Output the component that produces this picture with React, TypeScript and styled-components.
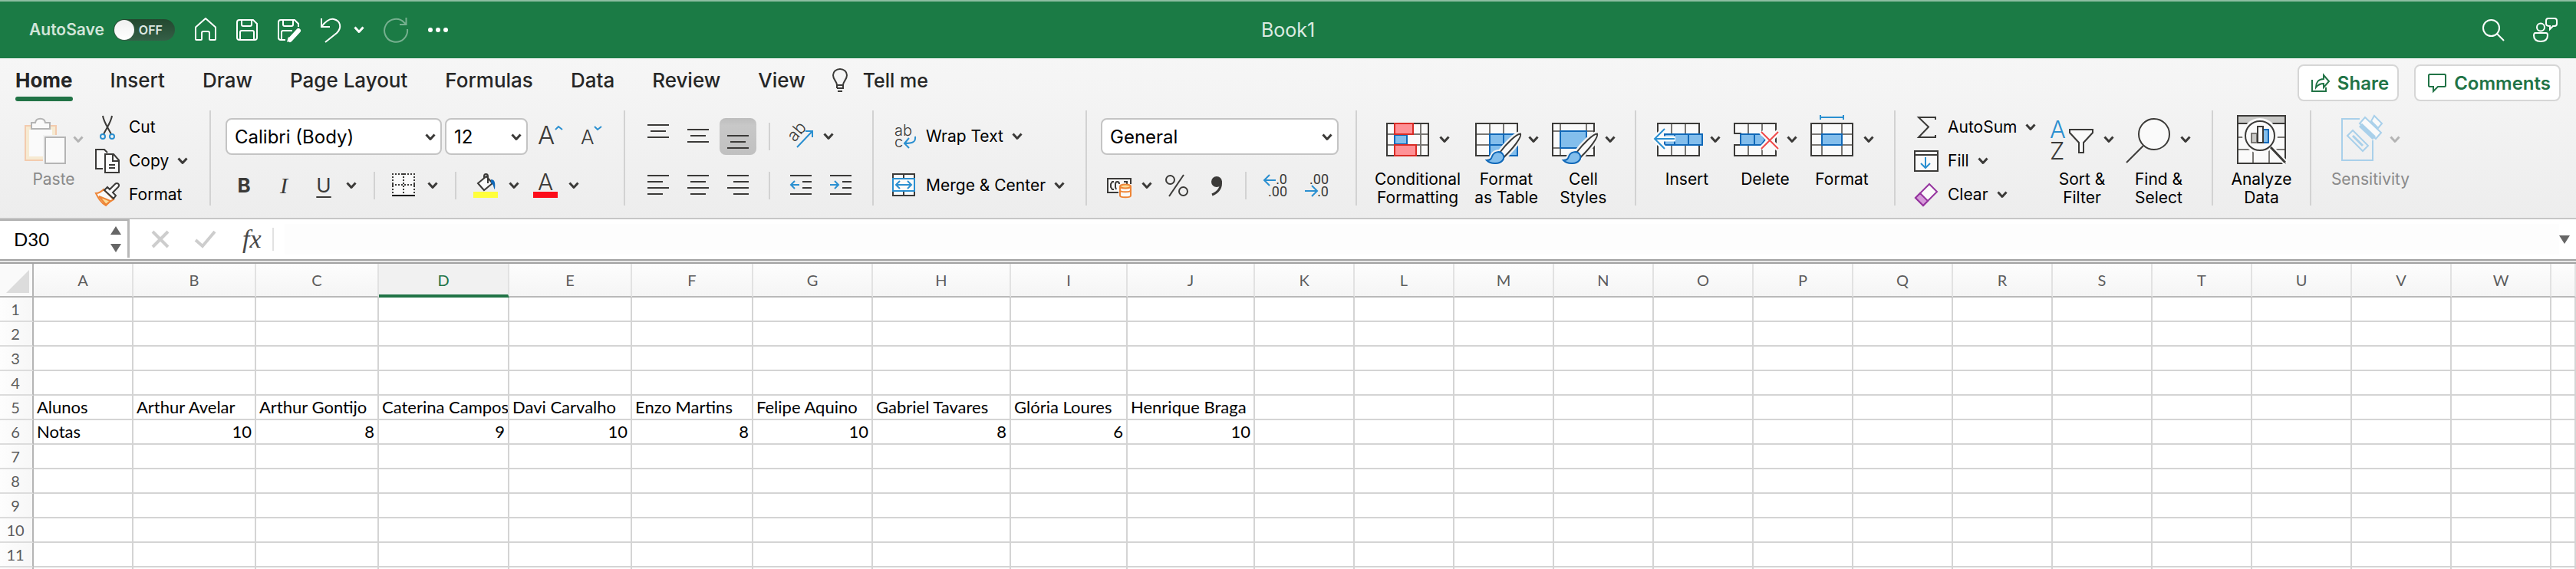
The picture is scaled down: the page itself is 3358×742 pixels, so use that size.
import React from 'react';
import styled, { createGlobalStyle, css } from 'styled-components';

const INK = '#3b3a38';
const GRID = '#797774';
const BLUE = '#2a8fd0';
const DEEP = '#1068b8';
const SKY = '#83beec';
const PAPER = '#fafafa';
const GREEN = '#217346';

const Global = createGlobalStyle`
  * { box-sizing: border-box; }
  html, body, #root { height: 100%; }
  body { margin: 0; background: #fff; font-family: Inter, 'Liberation Sans', sans-serif; color: #000; }
  button, input, select { font: inherit; color: inherit; }
  svg { display: block; flex: none; overflow: visible; }
`;

/* ---------- window and title bar ---------- */

const Window = styled.div`
  display: flex;
  flex-direction: column;
  height: 100vh;
  overflow: hidden;
`;

const TitleBar = styled.header`
  display: grid;
  grid-template-columns: 1fr auto 1fr;
  align-items: center;
  flex: none;
  height: 76px;
  padding: 0 24px;
  border-top: 2px solid #8dbda1;
  background: #1b7b45;
  color: #fff;
`;

const QuickAccess = styled.div`
  display: flex;
  align-items: center;
  gap: 26px;
  padding-left: 14px;
`;

const WindowTools = styled.div`
  display: flex;
  align-items: center;
  justify-content: flex-end;
  gap: 38px;
`;

const DocTitle = styled.h1`
  margin: 0;
  font-size: 25px;
  line-height: 32px;
  font-weight: 400;
  color: #dcebe2;
`;

const AutoSave = styled.label`
  display: flex;
  align-items: center;
  gap: 12px;
  font-size: 21px;
  line-height: 28px;
  font-weight: 600;
  color: #d1e5d9;
`;

const Switch = styled.span`
  position: relative;
  display: flex;
  align-items: center;
  width: 80px;
  height: 28px;
  padding-left: 33px;
  border-radius: 14px;
  background: linear-gradient(#23482f, #355f47);
  font-size: 16px;
  color: #dfe9e3;
`;

const SwitchInput = styled.input`
  position: absolute;
  inset: 0;
  width: 100%;
  height: 100%;
  margin: 0;
  opacity: 0;
`;

const Knob = styled.span`
  position: absolute;
  left: 1px;
  top: 1px;
  width: 26px;
  height: 26px;
  border-radius: 50%;
  background: linear-gradient(#f0f0f0, #fff);
`;

const IconButton = styled.button<{ $gap?: number; $faded?: boolean }>`
  display: flex;
  align-items: center;
  justify-content: center;
  gap: ${(p) => p.$gap ?? 14}px;
  flex: none;
  padding: 0;
  border: 0;
  background: none;
  opacity: ${(p) => (p.$faded ? 0.4 : 1)};
`;

/* ---------- tab strip ---------- */

const Ribbon = styled.section`
  flex: none;
  border-bottom: 2px solid #c6c6c6;
  background: linear-gradient(#f6f6f6, #ededed);
`;

const TabStrip = styled.nav`
  display: flex;
  align-items: flex-start;
  justify-content: space-between;
  height: 58px;
  padding: 0 20px;
`;

const Tabs = styled.div`
  display: flex;
  gap: 49px;
`;

const Tab = styled.button<{ $active?: boolean }>`
  padding: 8px 0 0;
  border: 0;
  background: none;
  font-size: 26px;
  line-height: 42px;
  font-weight: ${(p) => (p.$active ? 700 : 500)};
  white-space: nowrap;
  color: #262626;
  &::after {
    content: '';
    display: block;
    height: 6px;
    border-radius: 3px;
    background: ${(p) => (p.$active ? GREEN : 'transparent')};
  }
`;

const TellMe = styled.button`
  display: flex;
  align-items: center;
  gap: 20px;
  height: 42px;
  margin: 8px 0 0 -14px;
  padding: 0;
  border: 0;
  background: none;
  font-size: 25px;
  font-weight: 500;
  white-space: nowrap;
  color: #262626;
`;

const ShareActions = styled.div`
  display: flex;
  gap: 20px;
  padding-top: 8px;
`;

const ActionButton = styled.button`
  display: flex;
  align-items: center;
  gap: 10px;
  height: 48px;
  padding: 0 11px 0 16px;
  border: 2px solid #d6d6d6;
  border-radius: 8px;
  background: #fff;
  font-size: 24px;
  font-weight: 600;
  color: ${GREEN};
`;

/* ---------- ribbon groups ---------- */

const RibbonBody = styled.div`
  display: flex;
  align-items: flex-start;
  padding: 10px 0 14px;
`;

const Separator = styled.div<{ $short?: boolean }>`
  flex: none;
  width: 2px;
  height: ${(p) => (p.$short ? 36 : 124)}px;
  background: #d2d2d2;
`;

const Group = styled.div<{ $width?: number; $pad: number; $gap?: number }>`
  display: flex;
  flex: none;
  align-items: flex-start;
  gap: ${(p) => p.$gap ?? 18}px;
  width: ${(p) => (p.$width ? `${p.$width}px` : 'auto')};
  padding: 6px 0 0 ${(p) => p.$pad}px;
`;

const TwoRows = styled.div`
  display: grid;
  grid-template-rows: 48px 36px;
  gap: 22px;
  padding-top: 4px;
`;

const Row = styled.div<{ $gap: number; $indent?: number }>`
  display: flex;
  align-items: center;
  gap: ${(p) => p.$gap}px;
  padding-left: ${(p) => p.$indent ?? 0}px;
`;

const Commands = styled.div<{ $width?: number }>`
  display: flex;
  flex-direction: column;
  gap: 12px;
  width: ${(p) => (p.$width ? `${p.$width}px` : 'auto')};
`;

const Command = styled.button`
  display: flex;
  align-items: center;
  gap: 12px;
  height: 32px;
  padding: 0;
  border: 0;
  background: none;
  font-size: 21px;
  line-height: 24px;
  white-space: nowrap;
`;

const BigButton = styled.button<{ $min?: number; $disabled?: boolean }>`
  display: flex;
  flex-direction: column;
  align-items: center;
  gap: 8px;
  min-width: ${(p) => p.$min ?? 82}px;
  padding: 0;
  border: 0;
  background: none;
  font-size: 21px;
  line-height: 24px;
  color: ${(p) => (p.$disabled ? '#8a8a8a' : '#000')};
`;

const BigLabel = styled.span`
  white-space: pre;
  text-align: center;
`;

const BigIcon = styled.span`
  display: flex;
  align-items: center;
  gap: 10px;
`;

const SquareButton = styled.button<{ $pressed?: boolean }>`
  display: flex;
  align-items: center;
  justify-content: center;
  width: 48px;
  height: ${(p) => (p.$pressed ? 48 : 36)}px;
  padding: 0;
  border: 0;
  border-radius: 8px;
  background: ${(p) => (p.$pressed ? 'linear-gradient(#bdbdbd, #c8c8c8 20%, #c0c0c0)' : 'none')};
`;

const Glyph = styled.button<{ $kind: 'bold' | 'italic' | 'underline' }>`
  width: 30px;
  padding: 0;
  border: 0;
  background: none;
  line-height: 32px;
  color: ${INK};
  ${(p) =>
    p.$kind === 'bold' &&
    css`
      font-size: 26px;
      font-weight: 700;
    `}
  ${(p) =>
    p.$kind === 'italic' &&
    css`
      font-family: 'Liberation Serif', serif;
      font-size: 30px;
      font-style: italic;
    `}
  ${(p) =>
    p.$kind === 'underline' &&
    css`
      font-size: 26px;
      text-decoration: underline 2px;
      text-underline-offset: 5px;
    `}
`;

const ComboBox = styled.div<{ $width: number }>`
  position: relative;
  width: ${(p) => p.$width}px;
  height: 48px;
`;

const ComboSelect = styled.select`
  appearance: none;
  width: 100%;
  height: 100%;
  padding: 0 30px 0 10px;
  border: 2px solid #c4c4c4;
  border-radius: 8px;
  background: #fff;
  font-size: 24px;
`;

const ComboArrow = styled.span`
  position: absolute;
  right: 9px;
  top: 20px;
  pointer-events: none;
`;

/* ---------- formula bar ---------- */

const FormulaBar = styled.div`
  display: flex;
  flex: none;
  align-items: center;
  height: 52px;
  padding-right: 8px;
  background: #fff;
`;

const NameBox = styled.div`
  display: flex;
  align-items: center;
  align-self: flex-start;
  width: 169px;
  height: 50px;
  padding: 0 8px 0 18px;
  border-top: 2px solid #b0b0b0;
  border-right: 3px solid #b8b8b8;
`;

const NameInput = styled.input`
  flex: 1;
  min-width: 0;
  padding: 0 0 2px;
  border: 0;
  outline: 0;
  background: none;
  font-family: Lato, 'Liberation Sans', sans-serif;
  font-size: 24px;
`;

const FormulaTools = styled.div`
  display: flex;
  align-items: center;
  gap: 34px;
  padding: 0 14px 0 29px;
  border-right: 2px solid #e2e2e2;
`;

const FormulaInput = styled.input`
  flex: 1;
  height: 40px;
  margin-left: 14px;
  padding: 0 8px;
  border: 0;
  outline: 0;
  background: #fdfdfd;
  font-size: 24px;
`;

const Fx = styled.button`
  padding: 0;
  border: 0;
  background: none;
  font-family: 'Liberation Serif', serif;
  font-size: 34px;
  line-height: 30px;
  font-style: italic;
  color: #484848;
`;

const Splitter = styled.div`
  flex: none;
  height: 6px;
  border: solid #a2a2a2;
  border-width: 2px 0;
  background: #e8e8e8;
`;

/* ---------- sheet ---------- */

const SheetArea = styled.main`
  flex: 1;
  min-height: 0;
  overflow: hidden;
`;

const Sheet = styled.table`
  width: 100%;
  table-layout: fixed;
  border-collapse: separate;
  border-spacing: 0;
  font-family: Lato, 'Liberation Sans', sans-serif;
`;

const Col = styled.col<{ $width?: number }>`
  width: ${(p) => (p.$width ? `${p.$width}px` : 'auto')};
`;

const Corner = styled.th`
  height: 44px;
  padding: 4px 4px 0 8px;
  border-right: 2px solid #b5b5b5;
  border-bottom: 2px solid #b5b5b5;
  background: #fafafa;
`;

const ColHead = styled.th<{ $selected?: boolean }>`
  height: 44px;
  padding: ${(p) => (p.$selected ? '2px 0 0' : '0')};
  border-right: 2px solid #e2e2e2;
  border-bottom: ${(p) => (p.$selected ? `4px solid ${GREEN}` : '2px solid #b9b9b9')};
  background: ${(p) => (p.$selected ? '#f1f1f1' : 'linear-gradient(#fdfdfd, #f5f5f5)')};
  font-size: 20px;
  line-height: 24px;
  font-weight: 400;
  color: ${(p) => (p.$selected ? GREEN : '#5c5c5c')};
`;

const RowHead = styled.th`
  height: 32px;
  padding: 0 2px 0 0;
  border-right: 2px solid #b5b5b5;
  border-bottom: 2px solid #dcdcdc;
  background: linear-gradient(90deg, #fdfdfd, #f7f7f7);
  font-size: 20px;
  line-height: 30px;
  font-weight: 400;
  color: #5c5c5c;
`;

const Cell = styled.td<{ $number?: boolean }>`
  height: 32px;
  padding: 0 4px;
  overflow: hidden;
  border-right: 2px solid #d4d4d4;
  border-bottom: 2px solid #d4d4d4;
  font-size: 22px;
  line-height: 30px;
  white-space: nowrap;
  text-align: ${(p) => (p.$number ? 'right' : 'left')};
`;

/* ---------- icons ---------- */

type IconProps = { w?: number; h?: number; stroke?: string; children: React.ReactNode };
const Icon = ({ w = 32, h = 32, stroke = INK, children }: IconProps) => (
  <svg width={w} height={h} viewBox={`0 0 ${w} ${h}`} fill="none" stroke={stroke} strokeWidth="2" aria-hidden="true">
    {children}
  </svg>
);

const Chevron = ({ color = INK, thin = false }: { color?: string; thin?: boolean }) => (
  <svg width={thin ? 12 : 14} height="10" viewBox={thin ? '1 0 12 10' : '0 0 14 10'} fill="none" stroke={color} strokeWidth="3" aria-hidden="true">
    <path d="M1.5 1.5 7 7.5l5.5-6" strokeLinejoin="round" />
  </svg>
);

const HANDLE = 'M59 24.5C54 24.5 41 37 32 49l6 5.5C49 43.5 61 29 59 24.5Z';
const BRISTLES = 'M15 59C20 59 21 57 22 54 24 48 32 46 36 51 40 57 34 63 27 63 22 63.5 18 62 15 59Z';
const Brush = () => (
  <>
    <path d={HANDLE} stroke="#f3f3f3" strokeWidth="7" />
    <path d={BRISTLES} stroke="#f3f3f3" strokeWidth="6" />
    <path d={HANDLE} fill={PAPER} />
    <path d={BRISTLES} fill={SKY} stroke={DEEP} />
  </>
);

const PasteIcon = () => (
  <Icon w={54} h={64} stroke="#b4b4b4">
    <path d="M1 14h40v45H1z" fill="#f6ead2" stroke="#f3cbae" />
    <path d="M6 19h30v35H6z" fill={PAPER} stroke="none" />
    <path d="M9 18v-8h5c1-7 12-7 13 0h6v8z" fill={PAPER} />
    <path d="M24 26h32v38H24z" fill="#f2f2f2" stroke="none" />
    <path d="M27 29h26v34H27z" fill={PAPER} />
  </Icon>
);

const CondIcon = () => (
  <Icon w={60} h={64}>
    <path d="M1 11h54v42H1z" fill={PAPER} />
    <path d="M11 12v40M45 12v40M2 25h52M2 39h52" stroke={GRID} />
    <path d="M11 26h16v12H11z" fill={SKY} stroke={DEEP} />
    <path d="M11 11h24v14H11zM11 39h28v14H11z" fill="#ff9196" stroke="#d92c26" />
  </Icon>
);

const FormatTableIcon = () => (
  <Icon w={60} h={64}>
    <path d="M1 11h54v42H1z" fill={PAPER} />
    <path d="M19 12v40M37 12v14M2 25h52M2 39h18" stroke={GRID} />
    <path d="M19 25h36v28H19zM37 25v28M19 39h36" fill={SKY} stroke={DEEP} />
    <path d="M1 11h54v13" />
    <Brush />
  </Icon>
);

const CellStylesIcon = () => (
  <Icon w={60} h={64}>
    <path d="M1 11h54v42H1z" fill={PAPER} />
    <path d="M11 12v40M45 12v40M2 21h52M2 43h52" stroke={GRID} />
    <path d="M11 21h34v22H11z" fill={SKY} stroke={DEEP} />
    <Brush />
  </Icon>
);

const InsertIcon = () => (
  <Icon w={64} h={64}>
    <path d="M5 11h54v42H5z" fill={PAPER} />
    <path d="M23 12v40M41 12v40" stroke={GRID} />
    <path d="M3 24h10v15H3z" fill={PAPER} stroke="none" />
    <path d="M14 25h49v14H14zM27 25v14M45 25v14" fill={SKY} stroke={DEEP} />
    <path d="M28 31H2M14 18 1 31l13 13" stroke={PAPER} strokeWidth="7" />
    <path d="M27 31H1M14 18 1 31l13 13" stroke={BLUE} />
  </Icon>
);

const DeleteIcon = () => (
  <Icon w={60} h={64}>
    <path d="M1 24V11h54v42H1V39h8V24z" fill={PAPER} />
    <path d="M19 12v12M37 12v12M19 40v12M37 40v12" stroke={GRID} />
    <path d="M9 25h27l5 7-5 7H9zM27 25v14" fill={SKY} stroke={DEEP} />
    <path d="m36 22 22 22M58 22 36 44" stroke={PAPER} strokeWidth="7" />
    <path d="m36 22 22 22M58 22 36 44" stroke="#f04a4a" />
  </Icon>
);

const FormatCellsIcon = () => (
  <Icon w={60} h={64}>
    <path d="M1 11h54v42H1z" fill={PAPER} />
    <path d="M15 12v40M41 12v40M2 25h52M2 39h52" stroke={GRID} />
    <path d="M15 25h26v14H15z" fill={SKY} stroke={DEEP} />
    <path d="M13 3h30M13 0v6M43 0v6" stroke={BLUE} />
  </Icon>
);

const SortIcon = () => (
  <Icon w={60} h={64}>
    <text x="-1" y="30" fontSize="31" fontWeight="300" fill={BLUE} stroke="none">A</text>
    <text x="-1" y="58" fontSize="31" fontWeight="300" fill={INK} stroke="none">Z</text>
    <path d="M25 19h30v4L43 36v13h-6V36L25 23z" fill={PAPER} />
  </Icon>
);

const FindIcon = () => (
  <Icon w={60} h={64}>
    <circle cx="35" cy="25" r="20" fill={PAPER} />
    <path d="M21 40-1 62" />
  </Icon>
);

const AnalyzeIcon = () => (
  <Icon w={64} h={64}>
    <path d="M1 1h62v62H1z" fill={PAPER} />
    <path d="M2 2h60v8H2z" fill="#c8c8c6" stroke="none" />
    <path d="M2 29h60M2 45h60M21 46v16M42 46v16" stroke={GRID} />
    <path d="M1 11h62" />
    <circle cx="30" cy="27" r="23" fill={PAPER} stroke="none" />
    <path d="m44 42 20 21" stroke={PAPER} strokeWidth="7" />
    <path d="m44 42 19 20" strokeWidth="3" />
    <circle cx="30" cy="27" r="19" fill={PAPER} />
    <path d="M19 24h7v12h-7z" fill="#c8c8c6" stroke={GRID} />
    <path d="M34 19h7v17h-7z" fill={SKY} stroke={DEEP} />
    <path d="M27 15h7v21h-7z" fill={PAPER} />
  </Icon>
);

const SensitivityIcon = () => (
  <Icon w={54} h={64} stroke="#a9d0ea">
    <path d="M24 5H1v54h40V33" />
    <path d="m8 27 7-7 20 20-7 7z" />
    <path d="m15 27 13 13" strokeWidth="3" />
    <path d="m24 11 7-8 21 20-7 8z" fill={PAPER} />
    <path d="m25 13 18 17" strokeWidth="6" />
    <path d="m39 8 4-7 10 10-5 6z" fill={PAPER} />
  </Icon>
);

const CutIcon = () => (
  <Icon>
    <path d="M10 1c1 7 4 11 11 24M22 1c-1 7-4 11-11 24" />
    <g stroke={BLUE}>
      <circle cx="10" cy="28" r="3" />
      <circle cx="22" cy="28" r="3" />
    </g>
  </Icon>
);

const CopyIcon = () => (
  <Icon>
    <path d="M10 26H1V1h11l4 4" fill={PAPER} />
    <path d="M13 7h11l7 8v16H13z" fill={PAPER} />
    <path d="M23 8v8h8M18 21h8M18 25h8" />
  </Icon>
);

const PainterIcon = () => (
  <Icon>
    <path d="M1 14c4 0 7-2 10-5l13 13c-4 2-7 4-10 8C7 26 4 20 1 14Z" fill={PAPER} stroke="#ee8536" />
    <path d="m5 18 15 6-6 5z" fill="#fbdc98" stroke="#ee8536" />
    <path d="m12 10 4-4 3 3 7-7c3-3 7 1 4 4l-7 7 4 4-3 4z" fill={PAPER} />
  </Icon>
);

const SumIcon = () => (
  <Icon>
    <path d="M28 6V3H6l13 12.5L6 29h22v-3" />
  </Icon>
);

const FillDownIcon = () => (
  <Icon>
    <path d="M1 3h30v26H1zM1 8h30" fill={PAPER} />
    <path d="M15 11v14M9 19l6 6 6-6" stroke={BLUE} />
  </Icon>
);

const EraserIcon = () => (
  <Icon stroke="#96359f">
    <path d="M20 2 30 12 12 30 2 20z" fill={PAPER} />
    <path d="m8 14 10 10-6 6L2 20z" fill="#d59ad9" />
  </Icon>
);

const GrowIcon = () => (
  <Icon>
    <text x="-1" y="26" fontSize="33" fontWeight="300" fill={INK} stroke="none">A</text>
    <path d="m22 7 4-4 5 4" stroke={BLUE} />
  </Icon>
);

const ShrinkIcon = () => (
  <Icon>
    <text x="1" y="26" fontSize="26" fontWeight="300" fill={INK} stroke="none">A</text>
    <path d="m19 3 4 4 5-4" stroke={BLUE} />
  </Icon>
);

const BordersIcon = () => (
  <Icon>
    <path d="M1 1h28v26H1z" fill={PAPER} stroke="none" />
    <path d="M0 1h30M0 15h30M1 0v27M15 0v27M29 0v27" strokeDasharray="2 2" />
    <path d="M0 29h30" stroke="#000" />
  </Icon>
);

const BucketIcon = () => (
  <Icon>
    <path d="m6 13 11-9 8 9-11 9z" fill={PAPER} />
    <path d="M14 7V4c0-4 5-4 5 0v9" />
    <path d="M23 8c5 0 6 4 5 13-2-2-1-6-5-9z" fill={DEEP} stroke="none" />
    <path d="M0 24h32v8H0z" fill="#ffff3c" stroke="none" />
  </Icon>
);

const FontColorIcon = () => (
  <Icon>
    <text x="6" y="22" fontSize="30" fontWeight="300" fill={INK} stroke="none">A</text>
    <path d="M0 24h32v8H0z" fill="#fc0d1b" stroke="none" />
  </Icon>
);

const LINES: Record<string, string> = {
  top: 'M0 1h28M4 9h20M0 17h28',
  middle: 'M0 7h28M4 15h20M0 23h28',
  bottom: 'M0 15h28M4 23h20M0 31h28',
  left: 'M0 3h28M0 11h20M0 19h28M0 27h20',
  center: 'M0 3h28M4 11h20M0 19h28M4 27h20',
  right: 'M0 3h28M8 11h20M0 19h28M8 27h20',
  indent: 'M0 3h28M16 11h12M16 19h12M0 27h28',
};
const LinesIcon = ({ kind, arrow }: { kind: string; arrow?: string }) => (
  <Icon w={28}>
    <path d={LINES[kind]} />
    {arrow && <path d={arrow} stroke={BLUE} />}
  </Icon>
);

const OrientationIcon = () => (
  <Icon>
    <text x="0" y="0" fontSize="22" fontWeight="300" fill={INK} stroke="none" transform="translate(8 24) rotate(-50)">ab</text>
    <path d="M11 30 31 9M22 9h9v8" stroke={BLUE} />
  </Icon>
);

const WrapIcon = () => (
  <Icon>
    <text x="3" y="15" fontSize="20" fontWeight="300" fill={INK} stroke="none">ab</text>
    <text x="3" y="30" fontSize="20" fontWeight="300" fill={INK} stroke="none">c</text>
    <path d="M30 16c1 7-3 9-14 9M22 18l-6 7 6 6" stroke={BLUE} />
  </Icon>
);

const MergeIcon = () => (
  <Icon>
    <path d="M1 1h28v28H1zM15 1v28" fill={PAPER} />
    <path d="M1 7h28v16H1z" fill={PAPER} stroke={BLUE} />
    <path d="M5 15h20M10 10l-5 5 5 5M20 10l5 5-5 5" stroke={BLUE} />
  </Icon>
);

const CurrencyIcon = () => (
  <Icon>
    <path d="M1 7h30v18H1z" fill={PAPER} />
    <path d="M9 11H7l-2 3v4l2 3h2M16 19v-5c0-4-5-4-5 0v4l1 3M22 11h4v3" />
    <path d="M15 14h19v20H15z" fill="#f0f0f0" stroke="none" />
    <path d="M17 17v12c0 3 14 3 14 0V17" fill={PAPER} stroke="#ee8536" />
    <path d="M17 22c0 3 14 3 14 0" stroke="#ee8536" />
    <ellipse cx="24" cy="17" rx="7" ry="2.5" fill="#fbdc98" stroke="#ee8536" />
  </Icon>
);

const PercentIcon = () => (
  <Icon w={30}>
    <circle cx="6.5" cy="8.5" r="5.5" />
    <circle cx="23.5" cy="23.5" r="5.5" />
    <path d="M24 2 5 30" />
  </Icon>
);

const CommaIcon = () => (
  <Icon w={30}>
    <circle cx="15" cy="11" r="7" fill={INK} stroke="none" />
    <path d="M20 10c2 8-3 15-11 18" strokeWidth="3" />
  </Icon>
);

const DecimalIcon = ({ more = false }: { more?: boolean }) => (
  <Icon>
    <g fontFamily="Roboto" fontSize="18" fill={INK} stroke="none" textAnchor="end">
      <text x="31" y="14">{more ? '.0' : '.00'}</text>
      <text x="31" y="30">{more ? '.00' : '.0'}</text>
    </g>
    <path d={more ? 'M16 9H1M8 2 1 9l7 7' : 'M0 23h15M9 16l7 7-7 7'} stroke={BLUE} />
  </Icon>
);

const HomeIcon = () => (
  <Icon w={28} stroke="#fff">
    <path d="M1 12.5 14 1l13 11.500V28q0 1-1 1h-6q-1 0-1-1v-8q0-2-2-2h-6q-2 0-2 2v8q0 1-1 1H2q-1 0-1-1Z" strokeLinejoin="round" />
  </Icon>
);

const SaveIcon = () => (
  <Icon w={28} stroke="#fff">
    <path d="M4 3h18l5 5v18q0 3-3 3H4q-3 0-3-3V6q0-3 3-3ZM7 3v6q0 2 2 2h9q2 0 2-2V3M5 29V19q0-2 2-2h14q2 0 2 2v10" />
  </Icon>
);

const SaveAsIcon = () => (
  <Icon w={28} stroke="#fff">
    <path d="M10 29H4q-3 0-3-3V6q0-3 3-3h18l5 5v4M7 3v6q0 2 2 2h9q2 0 2-2V3M5 29V19q0-2 2-2h12" />
    <path d="m27 17-11 12" strokeWidth="6" strokeLinecap="round" />
    <path d="m12 32 2-7 4 4z" fill="#fff" stroke="none" />
  </Icon>
);

const UndoIcon = () => (
  <Icon w={28} stroke="#fff">
    <path d="M3 1v11h11M3 12C9 4 14 1 19 2c9 2 11 11 4 18L8 32" />
  </Icon>
);

const RedoIcon = () => (
  <Icon stroke="#fff">
    <path d="M31 15A15 15 0 1 1 27 6.5L29.5 9M21 9h8.500V0" />
  </Icon>
);

const DotsIcon = () => (
  <Icon w={26} stroke="none">
    <g fill="#fff">
      <circle cx="3" cy="16" r="3" />
      <circle cx="13" cy="16" r="3" />
      <circle cx="23" cy="16" r="3" />
    </g>
  </Icon>
);

const SearchIcon = () => (
  <Icon w={28} h={28} stroke="#fff">
    <circle cx="11.5" cy="11.5" r="10.5" />
    <path d="m19 19 9 9" />
  </Icon>
);

const PeopleIcon = () => (
  <Icon stroke="#fff">
    <circle cx="10" cy="12.5" r="5" />
    <path d="M3 20h14q2 0 2 3 0 8-9 8t-9-8q0-3 2-3ZM20 1h8q3 0 3 3v4q0 3-3 3h-2l-4 4v-4q-5 0-5-3V4q0-3 3-3Z" />
  </Icon>
);

const BulbIcon = () => (
  <Icon w={20}>
    <path d="M6 22c0-5-5-7-5-13a9 8 0 0 1 18 0c0 6-5 8-5 13zM6 26h8v-4M6 22v4M7 30h6" />
  </Icon>
);

const ShareIcon = () => (
  <Icon w={24} h={24} stroke={GREEN}>
    <path d="M1 8v15h18v-5" />
    <path d="M16 2v5C9 7 6 12 6 18c3-4 6-5 10-5v5l7-8z" />
  </Icon>
);

const CommentIcon = () => (
  <Icon w={24} h={24} stroke={GREEN}>
    <path d="M2 1h20l1 1v14l-1 1h-9l-6 6v-6H2l-1-1V2z" />
  </Icon>
);

const SpinnerIcon = () => (
  <Icon w={14} h={34} stroke="none">
    <path d="M7 0l7 11H0zM7 34l7-11H0z" fill="#666" />
  </Icon>
);

/* ---------- data ---------- */

const TAB_NAMES = ['Home', 'Insert', 'Draw', 'Page Layout', 'Formulas', 'Data', 'Review', 'View'];

const COLUMNS: [string, number?][] = [
  ['A', 130], ['B', 160], ['C', 160], ['D', 170], ['E', 160], ['F', 158], ['G', 156], ['H', 180], ['I', 152], ['J', 166],
  ['K', 130], ['L', 130], ['M', 130], ['N', 130], ['O', 130], ['P', 130], ['Q', 130], ['R', 130], ['S', 130],
  ['T', 130], ['U', 130], ['V', 130], ['W', 130], [''],
];

const DATA: Record<number, (string | number)[]> = {
  5: ['Alunos', 'Arthur Avelar', 'Arthur Gontijo', 'Caterina Campos', 'Davi Carvalho', 'Enzo Martins', 'Felipe Aquino', 'Gabriel Tavares', 'Glória Loures', 'Henrique Braga'],
  6: ['Notas', 10, 8, 9, 10, 8, 10, 8, 6, 10],
};

const Combo = ({ label, value, width }: { label: string; value: string; width: number }) => (
  <ComboBox $width={width}>
    <ComboSelect aria-label={label} defaultValue={value}>
      <option>{value}</option>
    </ComboSelect>
    <ComboArrow>
      <Chevron thin />
    </ComboArrow>
  </ComboBox>
);

type BigProps = { icon: React.ReactNode; label: string; min?: number; disabled?: boolean; menu?: boolean };
const Big = ({ icon, label, min, disabled, menu = true }: BigProps) => (
  <BigButton $min={min} $disabled={disabled} disabled={disabled}>
    <BigIcon>
      {icon}
      {menu && <Chevron color={disabled ? '#b4b4b4' : INK} thin />}
    </BigIcon>
    <BigLabel>{label}</BigLabel>
  </BigButton>
);

type SmallProps = { icon: React.ReactNode; label: string; menu?: boolean };
const Small = ({ icon, label, menu }: SmallProps) => (
  <Command>
    {icon}
    {label}
    {menu && <Chevron thin />}
  </Command>
);

export default function App() {
  return (
    <Window>
      <Global />
      <TitleBar>
        <QuickAccess>
          <AutoSave>
            AutoSave
            <Switch>
              <SwitchInput type="checkbox" role="switch" />
              <Knob />
              OFF
            </Switch>
          </AutoSave>
          <IconButton aria-label="Home"><HomeIcon /></IconButton>
          <IconButton aria-label="Save"><SaveIcon /></IconButton>
          <IconButton aria-label="Save as"><SaveAsIcon /></IconButton>
          <IconButton aria-label="Undo" $gap={18}><UndoIcon /><Chevron color="#fff" thin /></IconButton>
          <IconButton aria-label="Redo" $faded><RedoIcon /></IconButton>
          <IconButton aria-label="More"><DotsIcon /></IconButton>
        </QuickAccess>
        <DocTitle>Book1</DocTitle>
        <WindowTools>
          <IconButton aria-label="Search"><SearchIcon /></IconButton>
          <IconButton aria-label="Account"><PeopleIcon /></IconButton>
        </WindowTools>
      </TitleBar>

      <Ribbon>
        <TabStrip>
          <Tabs>
            {TAB_NAMES.map((name, i) => (
              <Tab key={name} $active={i === 0}>{name}</Tab>
            ))}
            <TellMe><BulbIcon />Tell me</TellMe>
          </Tabs>
          <ShareActions>
            <ActionButton><ShareIcon />Share</ActionButton>
            <ActionButton><CommentIcon />Comments</ActionButton>
          </ShareActions>
        </TabStrip>

        <RibbonBody>
          <Group $width={273} $pad={32} $gap={16}>
            <Big icon={<PasteIcon />} label="Paste" min={76} disabled />
            <Commands>
              <Small icon={<CutIcon />} label="Cut" />
              <Small icon={<CopyIcon />} label="Copy" menu />
              <Small icon={<PainterIcon />} label="Format" />
            </Commands>
          </Group>
          <Separator />
          <Group $width={538} $pad={19}>
            <TwoRows>
              <Row $gap={14}>
                <Row $gap={4}>
                  <Combo label="Font" value="Calibri (Body)" width={282} />
                  <Combo label="Font size" value="12" width={108} />
                </Row>
                <Row $gap={22}>
                  <IconButton aria-label="Increase font size"><GrowIcon /></IconButton>
                  <IconButton aria-label="Decrease font size"><ShrinkIcon /></IconButton>
                </Row>
              </Row>
              <Row $gap={22} $indent={9}>
                <Glyph $kind="bold">B</Glyph>
                <Glyph $kind="italic">I</Glyph>
                <Row $gap={14}>
                  <Glyph $kind="underline">U</Glyph>
                  <IconButton aria-label="Underline style"><Chevron /></IconButton>
                </Row>
                <Separator $short />
                <IconButton aria-label="Borders"><BordersIcon /><Chevron /></IconButton>
                <Separator $short />
                <Row $gap={18}>
                  <IconButton aria-label="Fill colour"><BucketIcon /><Chevron /></IconButton>
                  <IconButton aria-label="Font colour"><FontColorIcon /><Chevron /></IconButton>
                </Row>
              </Row>
            </TwoRows>
          </Group>
          <Separator />
          <Group $width={322} $pad={19}>
            <TwoRows>
              <Row $gap={16}>
                <Row $gap={4}>
                  <SquareButton aria-label="Top align"><LinesIcon kind="top" /></SquareButton>
                  <SquareButton aria-label="Middle align"><LinesIcon kind="middle" /></SquareButton>
                  <SquareButton aria-label="Bottom align" $pressed><LinesIcon kind="bottom" /></SquareButton>
                </Row>
                <Separator $short />
                <Row $gap={0} $indent={8}>
                  <IconButton aria-label="Orientation"><OrientationIcon /><Chevron thin /></IconButton>
                </Row>
              </Row>
              <Row $gap={16}>
                <Row $gap={4}>
                  <SquareButton aria-label="Align left"><LinesIcon kind="left" /></SquareButton>
                  <SquareButton aria-label="Align centre"><LinesIcon kind="center" /></SquareButton>
                  <SquareButton aria-label="Align right"><LinesIcon kind="right" /></SquareButton>
                </Row>
                <Separator $short />
                <Row $gap={4}>
                  <SquareButton aria-label="Decrease indent"><LinesIcon kind="indent" arrow="M12 15H1M6 10l-5 5 5 5" /></SquareButton>
                  <SquareButton aria-label="Increase indent"><LinesIcon kind="indent" arrow="M0 15h11M6 10l5 5-5 5" /></SquareButton>
                </Row>
              </Row>
            </TwoRows>
          </Group>
          <Separator />
          <Group $width={276} $pad={24}>
            <TwoRows>
              <Row $gap={0}><Small icon={<WrapIcon />} label="Wrap Text" menu /></Row>
              <Row $gap={0}><Small icon={<MergeIcon />} label="Merge & Center" menu /></Row>
            </TwoRows>
          </Group>
          <Separator />
          <Group $width={350} $pad={18}>
            <TwoRows>
              <Combo label="Number format" value="General" width={310} />
              <Row $gap={22} $indent={8}>
                <Row $gap={18}>
                  <IconButton aria-label="Currency"><CurrencyIcon /><Chevron thin /></IconButton>
                  <IconButton aria-label="Percent"><PercentIcon /></IconButton>
                </Row>
                <IconButton aria-label="Comma style"><CommaIcon /></IconButton>
                <Separator $short />
                <IconButton aria-label="Increase decimal"><DecimalIcon more /></IconButton>
                <IconButton aria-label="Decrease decimal"><DecimalIcon /></IconButton>
              </Row>
            </TwoRows>
          </Group>
          <Separator />
          <Group $width={362} $pad={23}>
            <Big icon={<CondIcon />} label={'Conditional\nFormatting'} min={112} />
            <Big icon={<FormatTableIcon />} label={'Format\nas Table'} />
            <Big icon={<CellStylesIcon />} label={'Cell\nStyles'} />
          </Group>
          <Separator />
          <Group $width={336} $pad={23}>
            <Big icon={<InsertIcon />} label="Insert" />
            <Big icon={<DeleteIcon />} label="Delete" />
            <Big icon={<FormatCellsIcon />} label="Format" />
          </Group>
          <Separator />
          <Group $width={412} $pad={24}>
            <Commands $width={160}>
              <Small icon={<SumIcon />} label="AutoSum" menu />
              <Small icon={<FillDownIcon />} label="Fill" menu />
              <Small icon={<EraserIcon />} label="Clear" menu />
            </Commands>
            <Big icon={<SortIcon />} label={'Sort &\nFilter'} />
            <Big icon={<FindIcon />} label={'Find &\nSelect'} />
          </Group>
          <Separator />
          <Group $width={126} $pad={22}>
            <Big icon={<AnalyzeIcon />} label={'Analyze\nData'} menu={false} />
          </Group>
          <Separator />
          <Group $pad={24}>
            <Big icon={<SensitivityIcon />} label="Sensitivity" min={106} disabled />
          </Group>
        </RibbonBody>
      </Ribbon>

      <FormulaBar>
        <NameBox>
          <NameInput aria-label="Name box" defaultValue="D30" />
          <SpinnerIcon />
        </NameBox>
        <FormulaTools>
          <IconButton aria-label="Cancel">
            <svg width="22" height="22" viewBox="0 0 22 22" stroke="#cdcdcd" strokeWidth="4"><path d="m1 1 20 20M21 1 1 21" /></svg>
          </IconButton>
          <IconButton aria-label="Enter">
            <svg width="28" height="22" viewBox="0 0 28 22" fill="none" stroke="#cdcdcd" strokeWidth="4"><path d="m1 12 9 8L26 1" /></svg>
          </IconButton>
          <Fx aria-label="Insert function">fx</Fx>
        </FormulaTools>
        <FormulaInput aria-label="Formula" />
        <IconButton aria-label="Expand formula bar">
          <svg width="14" height="11" viewBox="0 0 14 11"><path d="M0 0h14L7 11z" fill="#666" /></svg>
        </IconButton>
      </FormulaBar>
      <Splitter />

      <SheetArea>
        <Sheet>
          <colgroup>
            <Col $width={44} />
            {COLUMNS.map(([name, width]) => <Col key={name} $width={width} />)}
          </colgroup>
          <thead>
            <tr>
              <Corner aria-label="Select all">
                <svg width="30" height="30" viewBox="0 0 30 30"><path d="M30 0v30H0z" fill="#dcdcdc" /></svg>
              </Corner>
              {COLUMNS.map(([name]) => <ColHead key={name} scope="col" $selected={name === 'D'}>{name}</ColHead>)}
            </tr>
          </thead>
          <tbody>
            {Array.from({ length: 12 }, (_, i) => i + 1).map((n) => (
              <tr key={n}>
                <RowHead scope="row">{n < 12 ? n : ''}</RowHead>
                {COLUMNS.map(([name], c) => {
                  const value = DATA[n]?.[c];
                  return <Cell key={name} $number={typeof value === 'number'}>{value}</Cell>;
                })}
              </tr>
            ))}
          </tbody>
        </Sheet>
      </SheetArea>
    </Window>
  );
}
